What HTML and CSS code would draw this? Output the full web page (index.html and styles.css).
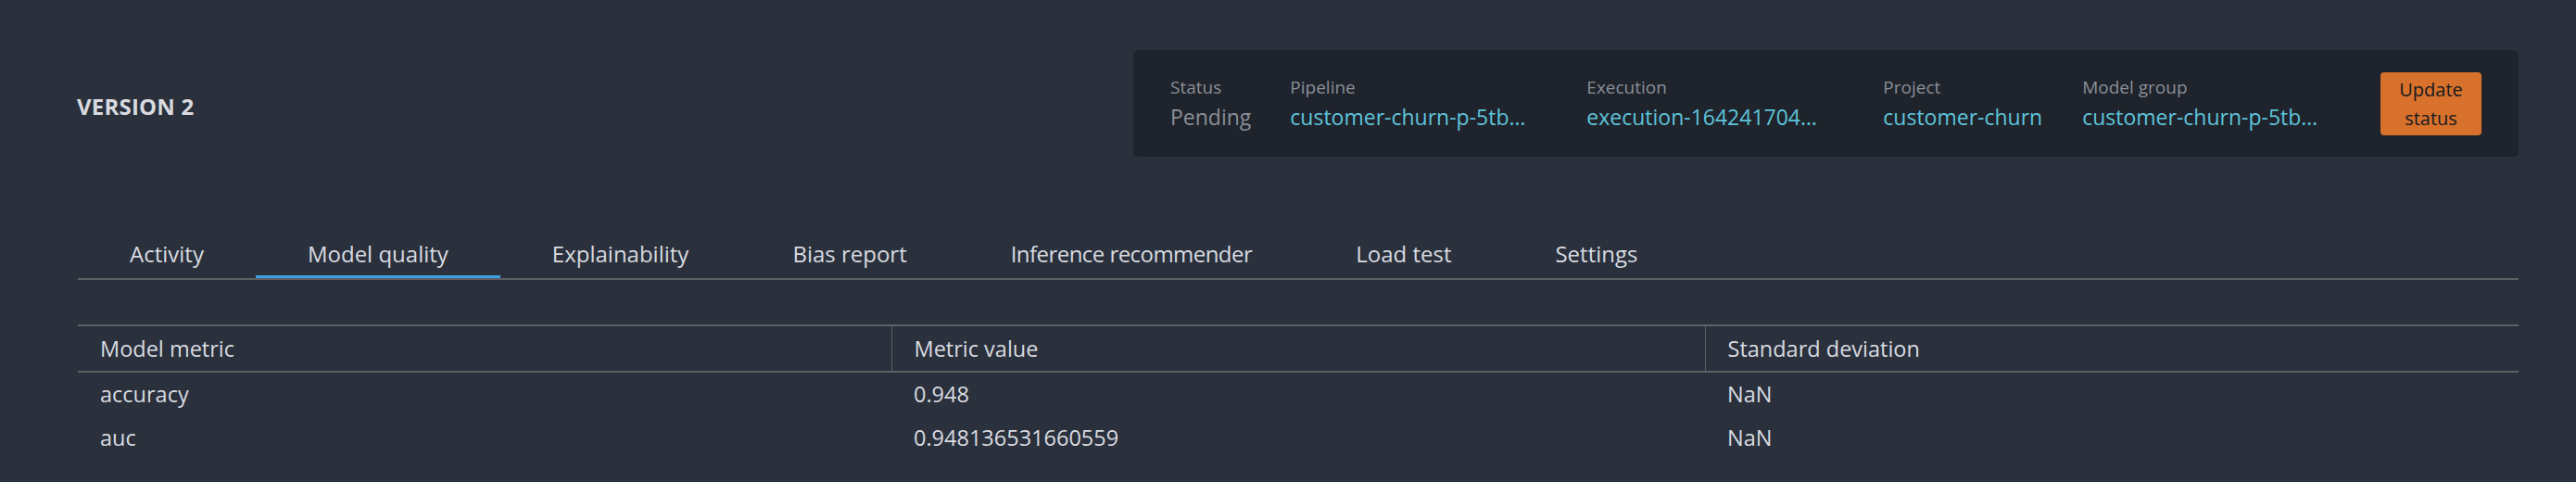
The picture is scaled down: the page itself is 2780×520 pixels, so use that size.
FILE: index.html
```html
<!DOCTYPE html>
<html lang="en">
<head>
<meta charset="utf-8">
<title>Version 2</title>
<link rel="stylesheet" href="styles.css">
</head>
<body>
<div class="page">
  <header class="version-header">
    <h2 class="version-title">VERSION 2</h2>
    <div class="summary">
      <div class="field status">
        <div class="field-label">Status</div>
        <div class="field-value muted">Pending</div>
      </div>
      <div class="field wide">
        <div class="field-label">Pipeline</div>
        <div class="field-value link">customer-churn-p-5tbhc0ny9hmy</div>
      </div>
      <div class="field wide">
        <div class="field-label">Execution</div>
        <div class="field-value link">execution-1642417042836</div>
      </div>
      <div class="field project">
        <div class="field-label">Project</div>
        <div class="field-value link">customer-churn</div>
      </div>
      <div class="field wide">
        <div class="field-label">Model group</div>
        <div class="field-value link">customer-churn-p-5tbhc0ny9hmy</div>
      </div>
      <button class="btn-update" type="button">Update status</button>
    </div>
  </header>

  <nav class="tabs">
    <div class="tab">Activity</div>
    <div class="tab active">Model quality</div>
    <div class="tab">Explainability</div>
    <div class="tab">Bias report</div>
    <div class="tab tight">Inference recommender</div>
    <div class="tab">Load test</div>
    <div class="tab">Settings</div>
  </nav>

  <table class="metrics">
    <thead>
      <tr>
        <th>Model metric</th>
        <th>Metric value</th>
        <th>Standard deviation</th>
      </tr>
    </thead>
    <tbody>
      <tr>
        <td>accuracy</td>
        <td>0.948</td>
        <td>NaN</td>
      </tr>
      <tr>
        <td>auc</td>
        <td>0.948136531660559</td>
        <td>NaN</td>
      </tr>
    </tbody>
  </table>
</div>
</body>
</html>
```
FILE: styles.css
```css
html, body {
  margin: 0;
  padding: 0;
  background: #2a303c;
}

body {
  font-family: "Open Sans", "Noto Sans", sans-serif;
  color: #d5d8dd;
  font-size: 24px;
}

.page {
  padding: 54px 62px 0 84px;
}

.version-header {
  display: flex;
  justify-content: space-between;
  align-items: center;
}

.version-title {
  margin: 6px 0 0 -1px;
  font-size: 24px;
  font-weight: 700;
  letter-spacing: 0.2px;
  color: #d8dadf;
}

.summary {
  display: flex;
  align-items: center;
  gap: 40px;
  background: #1e232c;
  border-radius: 5px;
  padding: 0 40px;
  height: 115px;
  box-sizing: border-box;
  width: 1495px;
}

.field {
  display: flex;
  flex-direction: column;
  flex-shrink: 0;
  min-width: 0;
}

.field.status {
  margin-right: 2px;
}

.field.wide {
  width: 280px;
}

.field.project {
  margin-right: 3px;
}

.field.wide .field-value {
  max-width: 255px;
}

.field-label {
  font-size: 19px;
  line-height: 26px;
  color: #8b8f97;
}

.field-value {
  font-size: 23px;
  line-height: 32px;
  margin-top: 3px;
  white-space: nowrap;
  overflow: hidden;
  text-overflow: ellipsis;
}

.field-value.muted {
  color: #8b8f97;
}

.field-value.link {
  color: #5ec3da;
}

.btn-update {
  flex-shrink: 0;
  margin-left: auto;
  width: 109px;
  height: 68px;
  padding: 0 14px;
  box-sizing: border-box;
  background: #d7712b;
  color: #16191f;
  border: none;
  border-radius: 4px;
  font-family: inherit;
  font-size: 20px;
  line-height: 31px;
  text-align: center;
}

.tabs {
  display: flex;
  margin-top: 79px;
  border-bottom: 2px solid #5e6064;
}

.tab {
  padding: 10px 56px;
  line-height: 32px;
  font-size: 24px;
  color: #d8dbe0;
  white-space: nowrap;
}

.tab.tight {
  letter-spacing: -0.55px;
}

.tab.active {
  box-shadow: inset 0 -3px 0 #3d9fe0;
}

.metrics {
  width: 100%;
  table-layout: fixed;
  border-collapse: collapse;
  margin-top: 48px;
}

.metrics th {
  text-align: left;
  font-weight: 400;
  padding: 8px 24px;
  line-height: 32px;
  font-size: 23.5px;
  color: #d8dbe0;
  border-top: 2px solid #5e6064;
  border-bottom: 2px solid #5e6064;
}

.metrics th + th {
  border-left: 1px solid #5e6064;
}

.metrics td {
  padding: 7px 24px 8px;
  line-height: 32px;
  font-size: 23.5px;
  color: #d8dbe0;
}
```
